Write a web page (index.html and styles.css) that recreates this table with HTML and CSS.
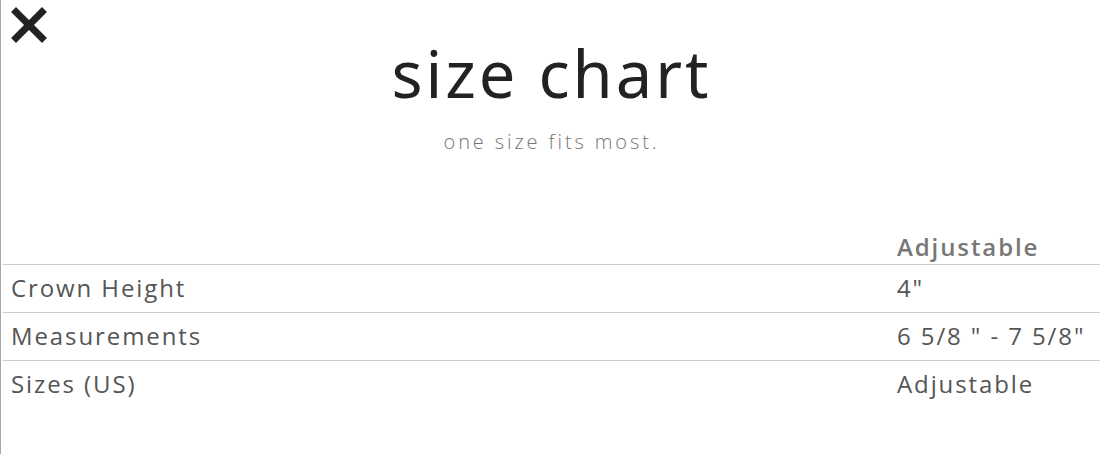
FILE: index.html
```html
<!DOCTYPE html>
<html lang="en">
<head>
<meta charset="utf-8">
<title>size chart</title>
<link rel="stylesheet" href="styles.css">
</head>
<body>
<div class="modal">
  <button class="close" aria-label="close">
    <svg width="36" height="36" viewBox="0 0 36 36"><path d="M5 5 L31 31 M31 5 L5 31" stroke="#222" stroke-width="7" stroke-linecap="square" fill="none"/></svg>
  </button>
  <header class="head">
    <h1 class="title">size chart</h1>
    <p class="sub">one size fits most.</p>
  </header>
  <table class="chart">
    <thead>
      <tr><th class="c1"></th><th class="c2">Adjustable</th></tr>
    </thead>
    <tbody>
      <tr><td class="c1">Crown Height</td><td class="c2">4"</td></tr>
      <tr><td class="c1">Measurements</td><td class="c2">6 5/8 " - 7 5/8"</td></tr>
      <tr><td class="c1">Sizes (US)</td><td class="c2">Adjustable</td></tr>
    </tbody>
  </table>
</div>
</body>
</html>
```
FILE: styles.css
```css
html, body { margin: 0; padding: 0; background: #fff; }
body { width: 1100px; height: 454px; overflow: hidden; }
.modal {
  position: relative;
  height: 454px;
  border-left: 1px solid #a8a8a8;
  box-sizing: border-box;
  padding-left: 2px;
}
.close {
  position: absolute;
  left: 10px;
  top: 7px;
  padding: 0;
  border: 0;
  background: none;
  width: 36px;
  height: 36px;
}
.close svg { display: block; }
.head { text-align: center; padding-top: 34px; }
.title {
  margin: 0;
  font-family: "Noto Sans", sans-serif;
  font-weight: 400;
  font-size: 65px;
  line-height: 78px;
  letter-spacing: 3px;
  color: #222;
}
.sub {
  margin: 16px 0 0;
  font-family: "Open Sans", sans-serif;
  font-weight: 300;
  font-size: 20px;
  line-height: 28px;
  letter-spacing: 2.9px;
  color: #777;
}
.chart {
  margin-top: 72px;
  width: 1097px;
  border-collapse: collapse;
  font-family: "Open Sans", sans-serif;
  font-size: 24px;
  letter-spacing: 1.9px;
  color: #555;
}
.chart th, .chart td { padding: 0 8px; text-align: left; }
.chart th {
  height: 36px;
  font-weight: 600;
  color: #777;
  vertical-align: middle;
}
.chart td { height: 44px; padding-bottom: 3px; border-top: 1px solid #ccc; }
.c1 { width: 870px; }
```
